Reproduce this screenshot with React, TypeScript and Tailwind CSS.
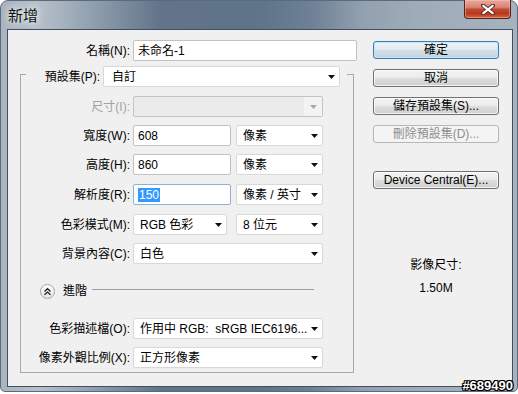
import React from "react";

function Arrow({ disabled }: { disabled?: boolean }) {
  return (
    <svg width="7" height="4" viewBox="0 0 7 4" className="shrink-0">
      <polygon points="0,0 7,0 3.5,4" fill={disabled ? "#a9a9a9" : "#111"} />
    </svg>
  );
}

function Select({
  text,
  className,
  disabled,
}: {
  text?: string;
  className: string;
  disabled?: boolean;
}) {
  if (disabled) {
    return (
      <div
        className={`h-[21px] flex items-stretch rounded-[2px] border border-[#c4c4c4] bg-[#ebebeb] ${className}`}
      >
        <div className="flex-1" />
        <div className="w-[18px] flex items-center justify-center bg-[#f3f3f3]">
          <Arrow disabled />
        </div>
      </div>
    );
  }
  return (
    <div
      className={`h-[21px] flex items-center justify-between rounded-[2px] border border-[#d8d8d8] bg-white pl-[6px] pr-[4px] ${className}`}
    >
      <span className="whitespace-pre leading-[16px]">{text}</span>
      <Arrow />
    </div>
  );
}

function Input({
  text,
  className,
  focused,
}: {
  text: string;
  className: string;
  focused?: boolean;
}) {
  return (
    <div
      className={`h-[21px] flex items-center rounded-[2px] border bg-white pl-[4px] ${
        focused ? "border-[#8fb1d8]" : "border-[#c2c2c2]"
      } ${className}`}
    >
      {focused ? (
        <span className="bg-[#3399ff] text-white leading-[14px] px-px">{text}</span>
      ) : (
        <span className="leading-[16px]">{text}</span>
      )}
    </div>
  );
}

function Row({
  label,
  children,
  className,
  disabled,
}: {
  label: string;
  children: React.ReactNode;
  className: string;
  disabled?: boolean;
}) {
  return (
    <div className={`flex items-center h-[21px] ${className}`}>
      <div
        className={`w-[109px] text-right leading-[16px] whitespace-nowrap ${
          disabled ? "text-[#a3a3a3]" : "text-black"
        }`}
      >
        {label}
      </div>
      <div className="ml-[3px] flex items-center">{children}</div>
    </div>
  );
}

function Button({
  label,
  className,
  kind,
}: {
  label: string;
  className: string;
  kind?: "default" | "disabled";
}) {
  let cls =
    "border-[#707070] bg-[linear-gradient(#f3f3f3_0%,#ebebeb_48%,#dddddd_52%,#cfcfcf_100%)] text-black shadow-[inset_0_0_0_1px_rgba(255,255,255,0.75)]";
  if (kind === "default")
    cls =
      "border-[#3c7fb1] bg-[linear-gradient(#eef4f8_0%,#e2ebf1_48%,#d2dee6_52%,#c5d4de_100%)] text-black shadow-[inset_0_0_0_1px_rgba(190,230,253,0.9)]";
  if (kind === "disabled")
    cls = "border-[#b3b7ba] bg-[#f4f4f4] text-[#8e8e8e]";
  return (
    <div
      className={`h-[18px] w-[126px] rounded-[3px] border flex items-center justify-center leading-[14px] whitespace-nowrap ${cls} ${className}`}
    >
      {label}
    </div>
  );
}

export default function App() {
  return (
    <div className="w-[518px] h-[394px] bg-white relative overflow-hidden font-['Liberation_Sans','Noto_Sans_CJK_TC',sans-serif] text-[12px] text-black">
      <div className="w-[518px] h-[392px] rounded-t-[8px] rounded-b-[5px] border border-[#5b6b7c] bg-[linear-gradient(90deg,#a8b3be_0%,#b7c1cb_7%,#8c9bab_19%,#617489_31%,#5f7389_50%,#6d8095_60%,#92a0af_70%,#9eabb8_80%,#a7b2be_100%)] flex flex-col">
        {/* title bar */}
        <div className="h-[28px] flex items-start justify-between pl-[7px] pr-[6px]">
          <span className="mt-[4px] text-[15px] leading-[20px] text-[#111] font-['Noto_Sans_CJK_TC',sans-serif] [text-shadow:0_0_6px_rgba(255,255,255,0.9),0_0_10px_rgba(255,255,255,0.6)]">
            新增
          </span>
          <div className="-mt-px w-[47px] h-[19px] rounded-b-[4px] border border-[#4f2320] border-t-0 bg-[linear-gradient(#e8aa9e_0%,#d98473_40%,#c24a32_52%,#b8371f_75%,#d4663f_100%)] shadow-[inset_0_0_0_1px_rgba(255,200,190,0.45)] flex items-center justify-center">
            <svg width="14" height="11" viewBox="0 0 14 11">
              <path d="M2 1.5 L12 9.5 M12 1.5 L2 9.5" stroke="#5a2a22" strokeWidth="4" strokeLinecap="round" />
              <path d="M2.3 1.8 L11.7 9.2 M11.7 1.8 L2.3 9.2" stroke="#ffffff" strokeWidth="2.2" strokeLinecap="round" />
            </svg>
          </div>
        </div>

        {/* client area */}
        <div className="flex-1 ml-[6px] mr-[4px] mb-[4px] border border-[#405062] bg-[#f0f0f0] flex">
          {/* left column */}
          <div className="w-[352px] pt-[10px] flex flex-col">
            <div className="flex items-center h-[21px]">
              <div className="w-[122px] text-right leading-[16px]">名稱(N):</div>
              <Input text="未命名-1" className="ml-[3px] w-[224px]" />
            </div>

            <div className="ml-[12px] mt-[13px] w-[334px] h-[299px] border border-[#a8a8a8] flex flex-col">
              <div className="-mt-[9px] ml-[5px] w-[321px] h-[21px] flex items-center bg-[#f0f0f0]">
                <div className="w-[74px] text-right leading-[16px]">預設集(P):</div>
                <Select text="自訂" className="ml-[3px] w-[237px] pl-[8px]" />
              </div>

              <Row label="尺寸(I):" className="mt-[9px]" disabled>
                <Select className="w-[190px]" disabled />
              </Row>
              <Row label="寬度(W):" className="mt-[8px]">
                <Input text="608" className="w-[98px]" />
                <Select text="像素" className="ml-[5px] w-[87px]" />
              </Row>
              <Row label="高度(H):" className="mt-[8px]">
                <Input text="860" className="w-[98px]" />
                <Select text="像素" className="ml-[5px] w-[87px]" />
              </Row>
              <Row label="解析度(R):" className="mt-[9px]">
                <Input text="150" className="w-[98px]" focused />
                <Select text="像素 / 英寸" className="ml-[5px] w-[87px]" />
              </Row>
              <Row label="色彩模式(M):" className="mt-[9px]">
                <Select text="RGB 色彩" className="w-[94px]" />
                <Select text="8 位元" className="ml-[9px] w-[87px]" />
              </Row>
              <Row label="背景內容(C):" className="mt-[8px]">
                <Select text="白色" className="w-[190px]" />
              </Row>

              <div className="mt-[19px] h-[16px] flex items-center">
                <div className="ml-[19px] w-[15px] h-[15px] rounded-full border border-[#a3a3a3] bg-[linear-gradient(#ffffff,#e6e6e6)] flex items-center justify-center">
                  <svg width="9" height="9" viewBox="0 0 9 9">
                    <polyline points="1.5,4.5 4.5,1.8 7.5,4.5" fill="none" stroke="#222" strokeWidth="1.4" />
                    <polyline points="1.5,7.8 4.5,5.1 7.5,7.8" fill="none" stroke="#222" strokeWidth="1.4" />
                  </svg>
                </div>
                <span className="ml-[8px] leading-[16px]">進階</span>
                <div className="flex-1 ml-[5px] mr-[39px] h-px bg-[#9c9c9c] -mt-[3px]" />
              </div>

              <Row label="色彩描述檔(O):" className="mt-[19px]">
                <Select text="作用中 RGB:  sRGB IEC6196..." className="w-[190px]" />
              </Row>
              <Row label="像素外觀比例(X):" className="mt-[8px]">
                <Select text="正方形像素" className="w-[190px]" />
              </Row>
            </div>
          </div>

          {/* right column */}
          <div className="ml-[13px] w-[126px] pt-[11px] flex flex-col items-center">
            <Button label="確定" className="" kind="default" />
            <Button label="取消" className="mt-[10px]" />
            <Button label="儲存預設集(S)..." className="mt-[10px]" />
            <Button label="刪除預設集(D)..." className="mt-[10px]" kind="disabled" />
            <Button label="Device Central(E)..." className="mt-[28px]" />
            <div className="mt-[68px] leading-[16px]">影像尺寸:</div>
            <div className="mt-[7px] leading-[16px]">1.50M</div>
          </div>
        </div>
      </div>

      <div className="absolute right-[5px] bottom-[1px] text-[13px] leading-[14px] font-bold text-white [text-shadow:1px_0_0_#000,-1px_0_0_#000,0_1px_0_#000,0_-1px_0_#000,1px_1px_0_#000,-1px_-1px_0_#000,1px_-1px_0_#000,-1px_1px_0_#000]">
        #689490
      </div>
    </div>
  );
}
